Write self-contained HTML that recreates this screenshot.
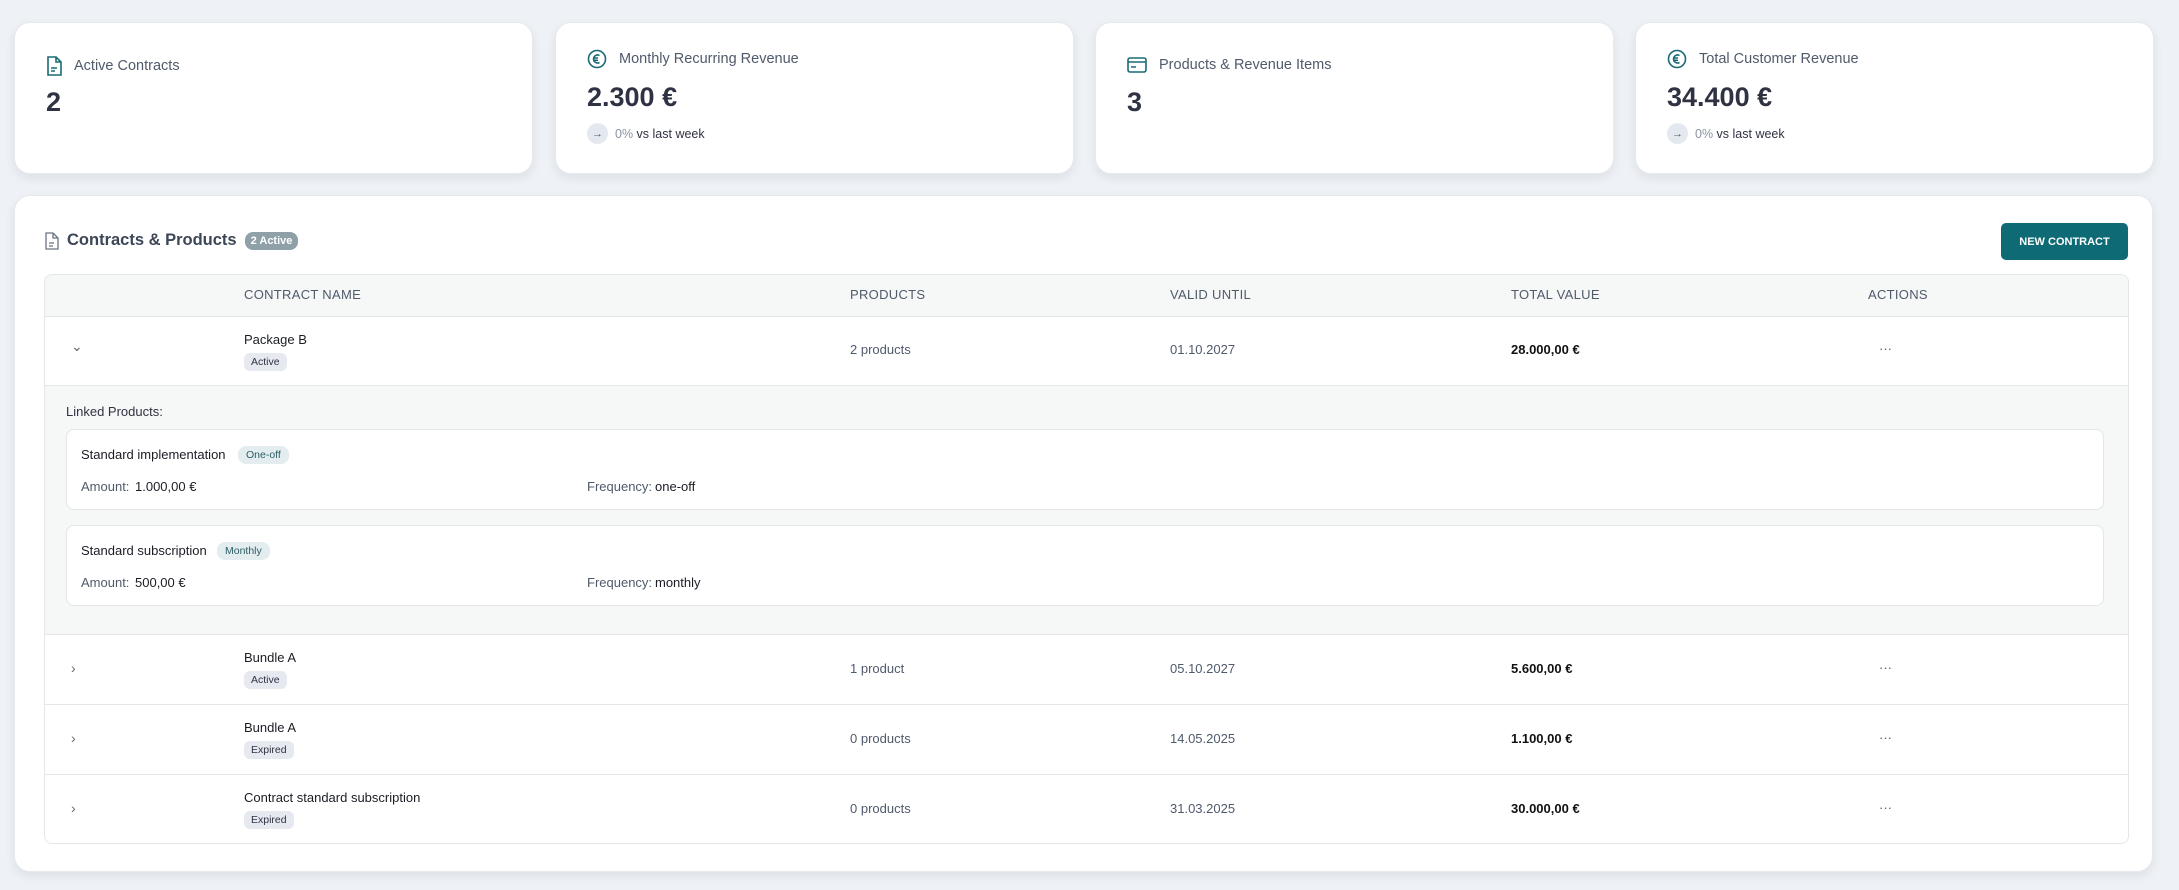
<!DOCTYPE html>
<html><head><meta charset="utf-8"><style>
*{box-sizing:border-box;margin:0;padding:0}
body{width:2179px;height:890px;background:#eef1f5;font-family:"Liberation Sans",sans-serif;color:#1a1d24;position:relative;overflow:hidden}
.card{position:absolute;top:22px;height:152px;width:519px;background:#fff;border-radius:16px;box-shadow:0 4px 10px rgba(30,40,60,.08);border:1px solid #e6e9ee}
.ct{position:absolute;left:31px;font-size:14.5px;color:#4f5a6b;display:flex;align-items:center;gap:12px}
.cv{position:absolute;left:31px;font-size:27px;font-weight:bold;color:#2f3242}
.trend{position:absolute;left:31px;top:100px;display:flex;align-items:center;font-size:12.5px;color:#2f3242}
.trend .c{width:21px;height:21px;border-radius:50%;background:#e4e9ef;display:flex;align-items:center;justify-content:center;font-size:11px;color:#4f5a6b;margin-right:7px}
.panel{position:absolute;left:14px;top:195px;width:2139px;height:677px;background:#fff;border-radius:16px;box-shadow:0 4px 10px rgba(30,40,60,.08);border:1px solid #e6e9ee}
.tbl{position:absolute;left:29px;top:78px;width:2085px;height:570px;border:1px solid #e3e6ea;border-radius:8px;overflow:hidden}
.hdr{height:42px;background:#f6f7f7;border-bottom:1px solid #e3e6ea;position:relative;font-size:13px;color:#4f5a6b;letter-spacing:.3px}
.hdr span,.row span{position:absolute}
.row{position:relative;border-bottom:1px solid #e3e6ea;font-size:13px}
.nm{color:#1a1d24}
.badge{display:inline-block;background:#e6eaf0;border-radius:6px;font-size:10.5px;padding:3px 7px;color:#2f3242}
.g{color:#4f5a6b}
.b{font-weight:bold;color:#111}
.chev{color:#666;font-size:14px}
.pc{position:absolute;left:21px;width:2038px;background:#fff;border:1px solid #e3e6ea;border-radius:8px;font-size:13px}
.pc span{position:absolute}
.tb{background:#e3ecef;color:#2b5f66;border-radius:8px;font-size:10.5px;padding:3px 8px}
</style></head><body>
<div class="card" style="left:14px">
 <div class="ct" style="top:33px"><svg width="16" height="20" viewBox="0 0 16 20" fill="none" stroke="#1a6a74" stroke-width="1.6"><path d="M2 1h8l5 5v13H2z"/><path d="M10 1v5h5"/><path d="M5 12h6M5 15h4"/></svg>Active Contracts</div>
 <div class="cv" style="top:64px">2</div>
</div>
<div class="card" style="left:555px">
 <div class="ct" style="top:26px"><svg width="20" height="20" viewBox="0 0 20 20" fill="none" stroke="#1a6a74" stroke-width="1.6"><circle cx="10" cy="10" r="8.5"/><path d="M12.5 6.5a4 4 0 1 0 0 7M6 9h5M6 11.3h5"/></svg>Monthly Recurring Revenue</div>
 <div class="cv" style="top:59px">2.300 €</div>
 <div class="trend"><span class="c">→</span><span style="color:#8a93a2">0%</span>&nbsp;vs last week</div>
</div>
<div class="card" style="left:1095px">
 <div class="ct" style="top:33px"><svg width="20" height="18" viewBox="0 0 20 18" fill="none" stroke="#1a6a74" stroke-width="1.6"><rect x="1" y="2" width="18" height="14" rx="2"/><path d="M1 6h18M4 11h5"/></svg>Products &amp; Revenue Items</div>
 <div class="cv" style="top:64px">3</div>
</div>
<div class="card" style="left:1635px">
 <div class="ct" style="top:26px"><svg width="20" height="20" viewBox="0 0 20 20" fill="none" stroke="#1a6a74" stroke-width="1.6"><circle cx="10" cy="10" r="8.5"/><path d="M12.5 6.5a4 4 0 1 0 0 7M6 9h5M6 11.3h5"/></svg>Total Customer Revenue</div>
 <div class="cv" style="top:59px">34.400 €</div>
 <div class="trend"><span class="c">→</span><span style="color:#8a93a2">0%</span>&nbsp;vs last week</div>
</div>

<div class="panel">
 <div style="position:absolute;left:30px;top:35px;display:flex;align-items:center;gap:8px;font-size:16.5px;font-weight:bold;color:#3c4656">
  <svg width="14" height="18" viewBox="0 0 14 18" fill="none" stroke="#6b7480" stroke-width="1.3"><path d="M1 1h7l5 5v11H1z"/><path d="M8 1v5h5M4 11h5M4 14h4"/></svg>
  Contracts &amp; Products <span style="background:#8fa0a8;color:#fff;font-size:11px;border-radius:8px;padding:3px 6px">2 Active</span>
 </div>
 <div style="position:absolute;left:1986px;top:27px;width:127px;height:37px;background:#0e6b75;border-radius:5px;color:#fff;font-size:11px;font-weight:bold;display:flex;align-items:center;justify-content:center">NEW CONTRACT</div>
 <div class="tbl">
  <div class="hdr"><span style="left:199px;top:12px">CONTRACT NAME</span><span style="left:805px;top:12px">PRODUCTS</span><span style="left:1125px;top:12px">VALID UNTIL</span><span style="left:1466px;top:12px">TOTAL VALUE</span><span style="left:1823px;top:12px">ACTIONS</span></div>
  <div class="row" style="height:69px"><span class="chev" style="left:26px;top:21px">⌄</span><span class="nm" style="left:199px;top:15px">Package B</span><span class="badge" style="left:199px;top:36px;position:absolute">Active</span><span class="g" style="left:805px;top:25px">2 products</span><span class="g" style="left:1125px;top:25px">01.10.2027</span><span class="b" style="left:1466px;top:25px">28.000,00 €</span><span class="g" style="left:1834px;top:24px">···</span></div>
  <div class="row" style="height:249px;background:#f6f7f7">
   <span style="left:21px;top:18px;font-size:13px;color:#2f3242">Linked Products:</span>
   <div class="pc" style="top:43px;height:81px"><span style="left:14px;top:17px">Standard implementation</span><span class="tb" style="left:171px;top:16px">One-off</span><span class="g" style="left:14px;top:49px">Amount:</span><span style="left:68px;top:49px">1.000,00 €</span><span class="g" style="left:520px;top:49px">Frequency:</span><span style="left:588px;top:49px">one-off</span></div>
   <div class="pc" style="top:139px;height:81px"><span style="left:14px;top:17px">Standard subscription</span><span class="tb" style="left:150px;top:16px">Monthly</span><span class="g" style="left:14px;top:49px">Amount:</span><span style="left:68px;top:49px">500,00 €</span><span class="g" style="left:520px;top:49px">Frequency:</span><span style="left:588px;top:49px">monthly</span></div>
  </div>
  <div class="row" style="height:70px"><span class="chev" style="left:26px;top:25px">›</span><span class="nm" style="left:199px;top:15px">Bundle A</span><span class="badge" style="left:199px;top:36px;position:absolute">Active</span><span class="g" style="left:805px;top:26px">1 product</span><span class="g" style="left:1125px;top:26px">05.10.2027</span><span class="b" style="left:1466px;top:26px">5.600,00 €</span><span class="g" style="left:1834px;top:25px">···</span></div>
  <div class="row" style="height:70px"><span class="chev" style="left:26px;top:25px">›</span><span class="nm" style="left:199px;top:15px">Bundle A</span><span class="badge" style="left:199px;top:36px;position:absolute">Expired</span><span class="g" style="left:805px;top:26px">0 products</span><span class="g" style="left:1125px;top:26px">14.05.2025</span><span class="b" style="left:1466px;top:26px">1.100,00 €</span><span class="g" style="left:1834px;top:25px">···</span></div>
  <div class="row" style="height:70px;border-bottom:none"><span class="chev" style="left:26px;top:25px">›</span><span class="nm" style="left:199px;top:15px">Contract standard subscription</span><span class="badge" style="left:199px;top:36px;position:absolute">Expired</span><span class="g" style="left:805px;top:26px">0 products</span><span class="g" style="left:1125px;top:26px">31.03.2025</span><span class="b" style="left:1466px;top:26px">30.000,00 €</span><span class="g" style="left:1834px;top:25px">···</span></div>
 </div>
</div>
</body></html>
